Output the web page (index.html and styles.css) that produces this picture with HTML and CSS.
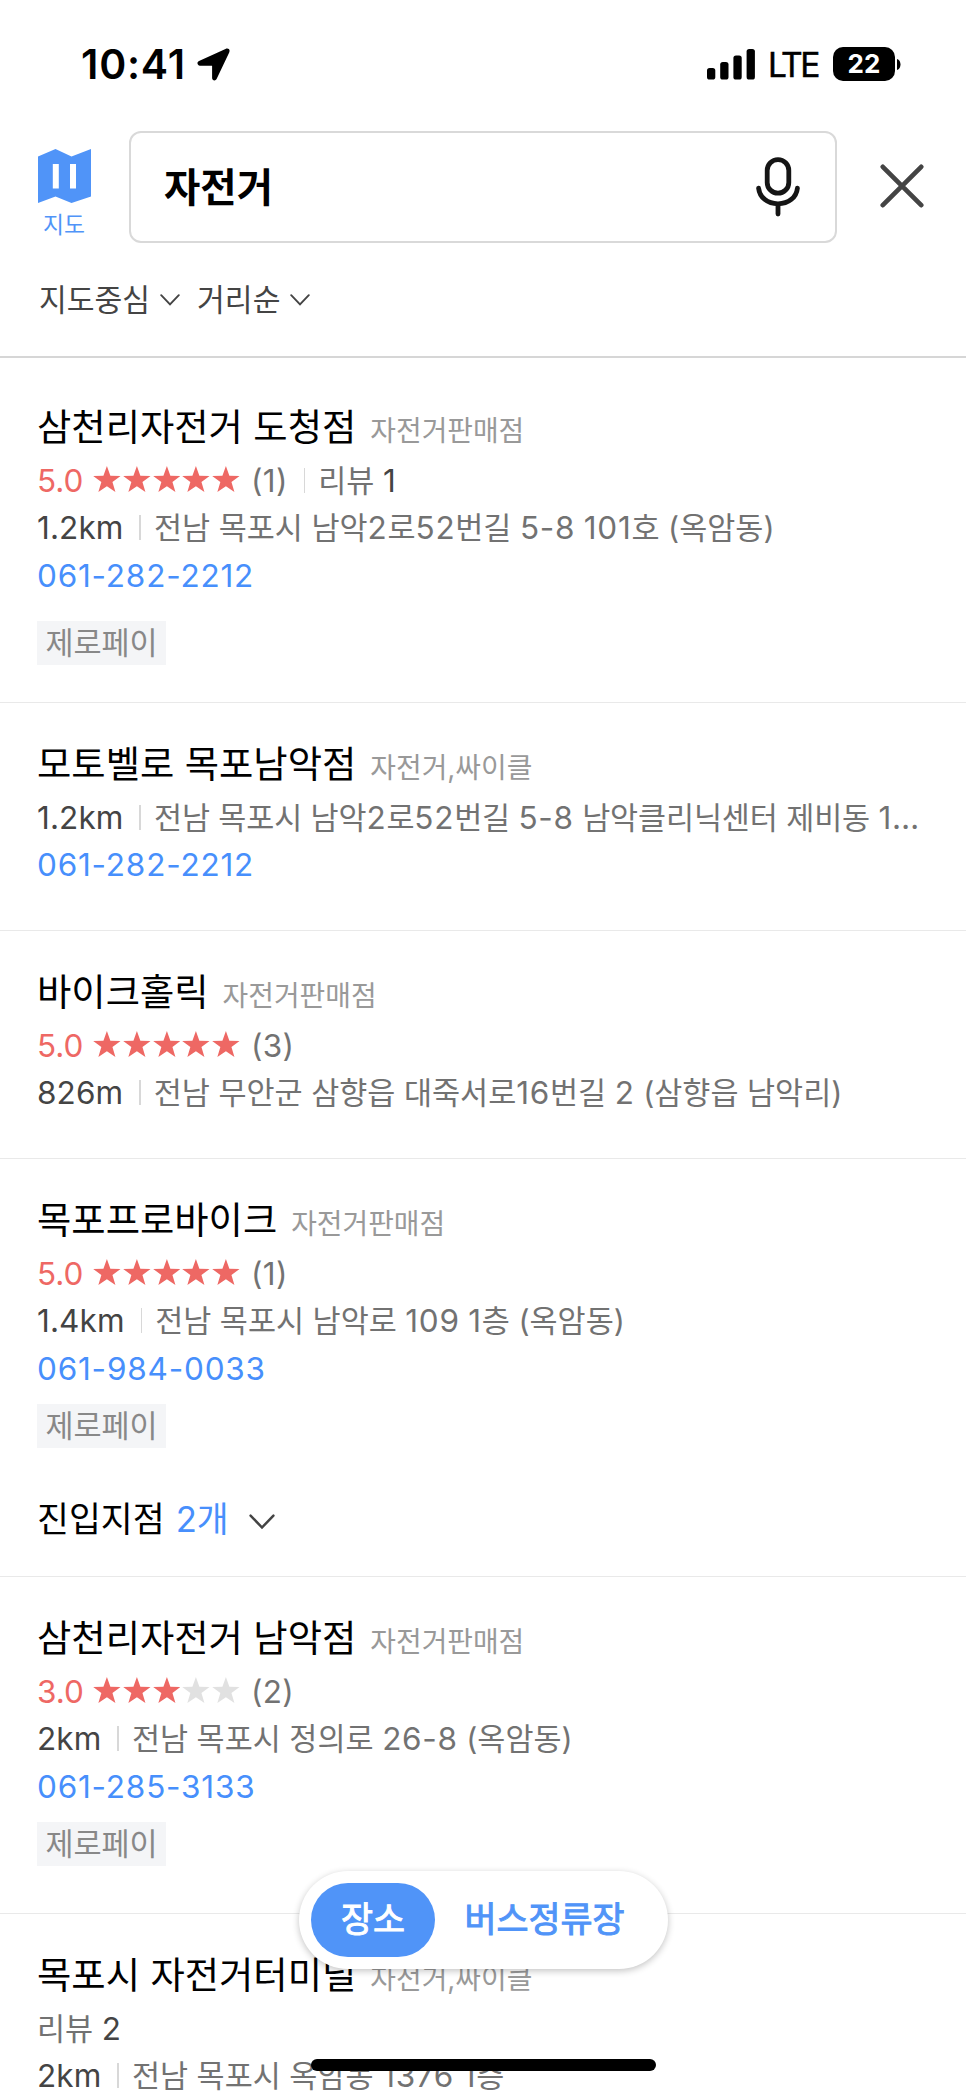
FILE: index.html
```html
<!DOCTYPE html>
<html lang="ko">
<head>
<meta charset="utf-8">
<title>자전거</title>
<link rel="stylesheet" href="styles.css">
</head>
<body>
<svg class="defs" width="0" height="0">
  <symbol id="star" viewBox="0 0 28 27"><path d="M14 0l3.5 9.7 10.3.3-8.2 6.2 3 9.9-8.6-5.8-8.6 5.8 3-9.9L.2 10l10.3-.3z"/></symbol>
  <symbol id="chevron" viewBox="0 0 20 12"><path d="M1.2 1.2L10 10.4l8.8-9.2" fill="none" stroke="currentColor" stroke-width="1.9" stroke-linecap="round"/></symbol>
</svg>
<div class="screen">
  <header class="header">
    <div class="status">
      <span class="clock">10:41</span>
      <svg class="arrow" viewBox="0 0 33 33"><path d="M31.8 1.1c.9.8 1 2 .4 3.3L19.6 31c-1 2.200-4.500 1.700-4.500-1V17.700H3C.2 17.700-.5 14.300 2 13.100L28.500.9c1.300-.6 2.500-.6 3.300.2z"/></svg>
      <div class="status-right">
        <svg class="signal" viewBox="0 0 48 31"><rect x="0" y="19" width="8.300" height="11.500" rx="2.600"/><rect x="13.200" y="13" width="8.300" height="17.500" rx="2.600"/><rect x="26.400" y="6.500" width="8.300" height="24" rx="2.600"/><rect x="39.600" y="0" width="8.300" height="30.500" rx="2.600"/></svg>
        <span class="lte">LTE</span>
        <span class="battery">22</span>
        <svg class="nub" viewBox="0 0 4 11"><path d="M0 0c2.300.6 3.500 3 3.500 5.500S2.300 10.400 0 11z"/></svg>
      </div>
    </div>
    <div class="searchbar">
      <div class="map">
        <svg class="map-icon" viewBox="0 0 53 54"><path fill="#5094f8" fill-rule="evenodd" d="M0 7.500L17.500 0 33.500 7.500 53 0v47.500L33.500 54 17.500 47.500 0 54zM14.800 15v24.500h6V15zM32 15v24.500h6V15z"/></svg>
        <span class="map-label">지도</span>
      </div>
      <div class="search">
        <span class="query">자전거</span>
        <svg class="mic" viewBox="0 0 44 60" fill="none" stroke="#151515" stroke-width="4.800" stroke-linecap="round"><rect x="11.200" y="2.600" width="21.600" height="33.600" rx="10.800"/><path d="M2.600 31.200C3.600 40.500 11.500 46.800 22 46.800s18.400-6.300 19.400-15.600M22 47v10"/></svg>
      </div>
      <svg class="close" viewBox="0 0 44 44" fill="none" stroke="#444" stroke-width="4.700" stroke-linecap="round"><path d="M2.800 2.800l38.400 38.400M41.200 2.800L2.800 41.200"/></svg>
    </div>
    <div class="filters">
      <span>지도중심</span><svg class="chev"><use href="#chevron"/></svg>
      <span class="second">거리순</span><svg class="chev"><use href="#chevron"/></svg>
    </div>
  </header>

  <main>
    <article class="item item-first">
      <div class="title"><h2>삼천리자전거 도청점</h2><span class="cat">자전거판매점</span></div>
      <div class="row"><span class="score">5.0</span><span class="stars"><svg><use href="#star"/></svg><svg><use href="#star"/></svg><svg><use href="#star"/></svg><svg><use href="#star"/></svg><svg><use href="#star"/></svg></span><span class="count">(1)</span><i class="bar"></i><span class="kr">리뷰 <b>1</b></span></div>
      <div class="row"><span class="dist">1.2km</span><i class="bar"></i><span class="kr">전남 목포시 남악<em>2</em>로<em>52</em>번길 <em>5-8</em> <em>101</em>호 (옥암동)</span></div>
      <div class="row"><a class="tel">061-282-2212</a></div>
      <span class="chip">제로페이</span>
    </article>
    <article class="item item-short">
      <div class="title"><h2>모토벨로 목포남악점</h2><span class="cat">자전거,싸이클</span></div>
      <div class="row"><span class="dist">1.2km</span><i class="bar"></i><span class="kr kr-tight">전남 목포시 남악<em>2</em>로<em>52</em>번길 <em>5-8</em> 남악클리닉센터 제비동 <em>1…</em></span></div>
      <div class="row"><a class="tel">061-282-2212</a></div>
    </article>
    <article class="item item-short">
      <div class="title"><h2>바이크홀릭</h2><span class="cat">자전거판매점</span></div>
      <div class="row"><span class="score">5.0</span><span class="stars"><svg><use href="#star"/></svg><svg><use href="#star"/></svg><svg><use href="#star"/></svg><svg><use href="#star"/></svg><svg><use href="#star"/></svg></span><span class="count">(3)</span></div>
      <div class="row"><span class="dist">826m</span><i class="bar"></i><span class="kr">전남 무안군 삼향읍 대죽서로<em>16</em>번길 <em>2</em> (삼향읍 남악리)</span></div>
    </article>
    <article class="item item-entry">
      <div class="title"><h2>목포프로바이크</h2><span class="cat">자전거판매점</span></div>
      <div class="row"><span class="score">5.0</span><span class="stars"><svg><use href="#star"/></svg><svg><use href="#star"/></svg><svg><use href="#star"/></svg><svg><use href="#star"/></svg><svg><use href="#star"/></svg></span><span class="count">(1)</span></div>
      <div class="row"><span class="dist">1.4km</span><i class="bar"></i><span class="kr">전남 목포시 남악로 <em>109</em> <em>1</em>층 (옥암동)</span></div>
      <div class="row"><a class="tel">061-984-0033</a></div>
      <span class="chip">제로페이</span>
      <div class="entry"><span>진입지점</span><span class="entry-count">2개</span><svg class="entry-chev" viewBox="0 0 20 12"><use href="#chevron"/></svg></div>
    </article>
    <article class="item item-tagged">
      <div class="title"><h2>삼천리자전거 남악점</h2><span class="cat">자전거판매점</span></div>
      <div class="row"><span class="score">3.0</span><span class="stars"><svg><use href="#star"/></svg><svg><use href="#star"/></svg><svg><use href="#star"/></svg><svg class="off"><use href="#star"/></svg><svg class="off"><use href="#star"/></svg></span><span class="count">(2)</span></div>
      <div class="row"><span class="dist">2km</span><i class="bar"></i><span class="kr">전남 목포시 정의로 <em>26-8</em> (옥암동)</span></div>
      <div class="row"><a class="tel">061-285-3133</a></div>
      <span class="chip">제로페이</span>
    </article>
    <article class="item item-last">
      <div class="title"><h2>목포시 자전거터미널</h2><span class="cat">자전거,싸이클</span></div>
      <div class="row"><span class="kr">리뷰 <b>2</b></span></div>
      <div class="row"><span class="dist">2km</span><i class="bar"></i><span class="kr">전남 목포시 옥암동 <em>1376</em> <em>1</em>층</span></div>
    </article>
  </main>

  <nav class="tabs"><span class="tab tab-on">장소</span><span class="tab">버스정류장</span></nav>
  <div class="home"></div>
</div>
</body>
</html>
```

FILE: styles.css
```css
* { box-sizing: border-box; }
body {
  margin: 0;
  background: #fff;
  font-family: Inter, "Noto Sans CJK KR", sans-serif;
  color: #000;
}
svg { display: block; flex: none; }
.defs { position: absolute; }
.screen {
  position: relative;
  width: 966px;
  height: 2091px;
  overflow: hidden;
}

.header { height: 358px; border-bottom: 2px solid #d6d6d6; }
.status {
  display: flex;
  align-items: center;
  height: 131px;
  padding: 0 65px 3px 81px;
}
.clock { font-size: 41px; font-weight: 600; letter-spacing: 0.8px; width: 116px; white-space: nowrap; }
.arrow { width: 33px; height: 33px; }
.status-right { display: flex; align-items: center; margin-left: auto; }
.signal { width: 48px; height: 31px; }
.lte { margin-left: 12px; width: 66px; font-size: 33.500px; letter-spacing: -2.600px; -webkit-text-stroke: 0.5px #000; padding: 2px 0 0 1px; }
.battery {
  width: 62px;
  height: 34px;
  border-radius: 10px;
  background: #000;
  color: #fff;
  font-size: 26px;
  font-weight: 700;
  line-height: 34px;
  text-align: center;
}
.nub { width: 4px; height: 11px; margin-left: 2px; }

.searchbar { display: flex; height: 112px; padding-left: 38px; }
.map { width: 53px; padding-top: 18px; text-align: center; }
.map-icon { width: 53px; height: 54px; }
.map-label { display: block; margin: 7px 1px 0 0; font-size: 22.800px; line-height: 30px; color: #5094f8; }
.search {
  display: flex;
  align-items: center;
  justify-content: space-between;
  width: 708px;
  margin-left: 38px;
  padding: 0 35px 0 33px;
  border: 2.500px solid #d9d9d9;
  border-radius: 12px;
}
.query { padding-top: 1px; font-size: 39.500px; font-weight: 700; line-height: 60px; }
.mic { width: 44px; height: 60px; }
.close { width: 44px; height: 44px; margin: 33px 0 0 43px; }
.filters {
  display: flex;
  align-items: center;
  height: 113px;
  padding: 0 0 0 39px;
  color: #444;
  font-size: 30.200px;
  line-height: 40px;
}
.chev { width: 20px; height: 12px; margin-left: 10px; }
.second { margin-left: 17px; }

.item { padding: 31px 37px 0 37px; border-bottom: 1px solid #e9e9e9; }
.item-first { height: 345px; padding-top: 39px; }
.item-short { height: 228px; }
.item-entry { height: 418px; }
.item-tagged { height: 337px; }
.item-last { height: 180px; border-bottom: 0; }
.title { display: flex; align-items: center; height: 59.600px; white-space: nowrap; }
.title h2 { margin: 2px 0 0; font-size: 37.300px; font-weight: 400; line-height: 60px; }
.cat { margin: 8px 0 0 14px; font-size: 27.900px; line-height: 40px; color: #999; }
.row { display: flex; align-items: center; height: 47.600px; line-height: 47px; white-space: nowrap; }
.score { width: 56px; font-size: 31.500px; color: #ee6864; }
.stars { display: flex; gap: 2px; width: 158px; fill: #ee6864; }
.stars svg { width: 27.800px; height: 26.800px; margin-top: -2px; }
.stars .off { fill: #e1e1e1; }
.count { font-size: 31.500px; letter-spacing: 0.3px; color: #727272; }
.dist { font-size: 31.500px; letter-spacing: 0.1px; color: #444; }
.bar { width: 1.500px; height: 25px; margin: 0 13px 0 16px; background: #d8d8d8; }
.kr { font-size: 30.500px; color: #727272; }
.kr em { font-style: normal; font-size: 31.500px; letter-spacing: 0.7px; }
.kr-tight { letter-spacing: -0.120px; }
.kr b { font-weight: 400; font-size: 31.500px; color: #444; }
.tel { font-size: 31.500px; letter-spacing: 0.8px; color: #478ffc; }
.chip {
  display: block;
  width: 129px;
  height: 44px;
  margin: 12px 0 0;
  background: #f4f5f7;
  color: #888;
  font-size: 30.500px;
  line-height: 43px;
  text-align: center;
}
.item-first .chip { margin-top: 22px; }
.entry { display: flex; align-items: center; height: 60px; margin-top: 41px; font-size: 34.700px; line-height: 60px; }
.entry-count { margin-left: 11px; color: #478ffc; }
.entry-chev { width: 26px; height: 15.600px; margin: 5px 0 0 20px; color: #444; }

.tabs {
  position: absolute;
  left: 299px;
  top: 1871px;
  display: flex;
  width: 369px;
  height: 98px;
  padding: 12px;
  border-radius: 49px;
  background: #fff;
  box-shadow: 0 2px 7px rgba(0, 0, 0, 0.24);
}
.tab { width: 219px; font-size: 34.800px; -webkit-text-stroke: 1px currentColor; line-height: 73px; text-align: center; color: #5094f8; }
.tab-on { width: 124px; border-radius: 37px; background: #5094f8; color: #fff; }
.home {
  position: absolute;
  left: 311px;
  top: 2059px;
  width: 345px;
  height: 12px;
  border-radius: 6px;
  background: #000;
}
```
